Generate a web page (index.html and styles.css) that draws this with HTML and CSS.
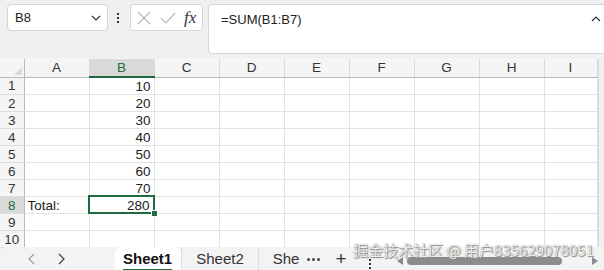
FILE: index.html
```html
<!DOCTYPE html>
<html lang="en">
<head>
    <meta charset="UTF-8">
    <title>Sheet</title>
    <link rel="stylesheet" href="styles.css">
</head>
<body>

    <div class="topbar">
        <div class="name-box">
            <span>B8</span>
            <svg class="chev" width="10" height="6" viewBox="0 0 10 6"><path d="M1 1l4 4 4-4" fill="none" stroke="#333" stroke-width="1.2"/></svg>
        </div>
        <div class="vdots"><i></i><i></i><i></i></div>
        <div class="fx-box">
            <svg width="14" height="14" viewBox="0 0 14 14"><path d="M1 1l12 12M13 1L1 13" stroke="#b8b8b8" stroke-width="1.2"/></svg>
            <svg width="16" height="12" viewBox="0 0 16 12"><path d="M1 6l5 5L15 1" fill="none" stroke="#b8b8b8" stroke-width="1.2"/></svg>
            <span class="fx">fx</span>
        </div>
        <div class="formula">
            <span>=SUM(B1:B7)</span>
            <svg class="caret" width="10" height="6" viewBox="0 0 10 6"><path d="M1 5l4-4 4 4" fill="none" stroke="#333" stroke-width="1.2"/></svg>
        </div>
    </div>

    <div class="sheet">
        <table class="grid">
            <colgroup>
                <col class="c-hd"><col class="c"><col class="c"><col class="c"><col class="c"><col class="c"><col class="c"><col class="c"><col class="c"><col class="c-last">
            </colgroup>
            <tr class="head">
                <th class="corner"></th><th>A</th><th class="sel-col">B</th><th>C</th><th>D</th><th>E</th><th>F</th><th>G</th><th>H</th><th>I</th>
            </tr>
            <tr><th>1</th><td></td><td class="num">10</td><td></td><td></td><td></td><td></td><td></td><td></td><td></td></tr>
            <tr><th>2</th><td></td><td class="num">20</td><td></td><td></td><td></td><td></td><td></td><td></td><td></td></tr>
            <tr><th>3</th><td></td><td class="num">30</td><td></td><td></td><td></td><td></td><td></td><td></td><td></td></tr>
            <tr><th>4</th><td></td><td class="num">40</td><td></td><td></td><td></td><td></td><td></td><td></td><td></td></tr>
            <tr><th>5</th><td></td><td class="num">50</td><td></td><td></td><td></td><td></td><td></td><td></td><td></td></tr>
            <tr><th>6</th><td></td><td class="num">60</td><td></td><td></td><td></td><td></td><td></td><td></td><td></td></tr>
            <tr><th>7</th><td></td><td class="num">70</td><td></td><td></td><td></td><td></td><td></td><td></td><td></td></tr>
            <tr><th class="sel-row">8</th><td>Total:</td><td class="num active">280</td><td></td><td></td><td></td><td></td><td></td><td></td><td></td></tr>
            <tr><th>9</th><td></td><td></td><td></td><td></td><td></td><td></td><td></td><td></td><td></td></tr>
            <tr><th>10</th><td></td><td></td><td></td><td></td><td></td><td></td><td></td><td></td><td></td></tr>
        </table>
        <div class="vscroll"></div>
    </div>

    <div class="tabbar">
        <div class="nav">
            <svg width="8" height="12" viewBox="0 0 8 12"><path d="M7 1L2 6l5 5" fill="none" stroke="#9a9a9a" stroke-width="1.2"/></svg>
            <svg width="8" height="12" viewBox="0 0 8 12"><path d="M1 1l5 5-5 5" fill="none" stroke="#444" stroke-width="1.2"/></svg>
        </div>
        <div class="tab active-tab"><span>Sheet1</span></div>
        <div class="tab">Sheet2</div>
        <div class="tab last-tab">She</div>
        <div class="more"><i></i><i></i><i></i></div>
        <div class="plus">+</div>
        <div class="vdots small"><i></i><i></i><i></i></div>
        <div class="hscroll">
            <span class="tri left"></span>
            <span class="thumb"></span>
            <span class="tri right"></span>
        </div>
        <div class="watermark">掘金技术社区 @ 用户835629078051</div>
    </div>

</body>
</html>
```

FILE: styles.css
```css
body {
    margin: 0;
    width: 604px;
    height: 270px;
    overflow: hidden;
    background-color: #f0f0f0;
    font-family: "Liberation Sans", Arial, sans-serif;
    color: #222;
}

.topbar {
    display: flex;
    align-items: flex-start;
    height: 58px;
    padding: 4px 0 0 7px;
    box-sizing: border-box;
}

.name-box {
    width: 101px;
    height: 27px;
    box-sizing: border-box;
    border: 1px solid #d6d6d6;
    border-radius: 4px;
    background-color: white;
    display: flex;
    align-items: center;
    justify-content: space-between;
    padding: 0 6px 0 7px;
    font-size: 13px;
}

.vdots {
    display: flex;
    flex-direction: column;
    gap: 2px;
    margin: 9px 11px 0 9px;
}

.vdots i {
    width: 2px;
    height: 2px;
    background-color: #333;
}

.fx-box {
    width: 73px;
    height: 27px;
    box-sizing: border-box;
    border: 1px solid #d6d6d6;
    border-radius: 4px;
    background-color: white;
    display: flex;
    align-items: center;
    gap: 9px;
    padding-left: 6px;
}

.fx {
    font-family: "Liberation Serif", serif;
    font-style: italic;
    font-size: 17px;
    color: #333;
    margin-left: -1px;
}

.formula {
    flex: 1;
    height: 50px;
    margin-left: 5px;
    box-sizing: border-box;
    border: 1px solid #d6d6d6;
    border-right: none;
    border-radius: 4px 0 0 4px;
    background-color: white;
    display: flex;
    align-items: flex-start;
    justify-content: space-between;
    padding: 7px 3px 0 12px;
    font-size: 13px;
}

.caret {
    margin-top: 4px;
}

.sheet {
    display: flex;
    height: 189px;
    border-top: 1px solid #f4f4f4;
    box-sizing: border-box;
}

.grid {
    border-collapse: collapse;
    table-layout: fixed;
    width: 597px;
    background-color: white;
    font-size: 13.5px;
}

.c-hd { width: 24px; }
.c { width: 65px; }
.c-last { width: 53px; }

.grid tr {
    height: 17px;
}

.grid td,
.grid th {
    border: 1px solid #e1e1e1;
    padding: 0 3px;
    height: 16px;
    line-height: 15px;
    white-space: nowrap;
    overflow: hidden;
}

.grid th {
    font-weight: normal;
    color: #333;
    background-color: #f5f5f5;
    border-color: #dcdcdc;
}

.grid tr th:first-child {
    text-align: center;
    padding: 0;
    border-left: none;
    border-right: 1px solid #b9b9b9;
}

.head th {
    height: 17px;
    border-top: none;
    border-bottom: 1px solid #b9b9b9;
}

.corner {
    position: relative;
}

.corner::after {
    content: "";
    position: absolute;
    right: 2px;
    bottom: 2px;
    border-left: 8px solid transparent;
    border-bottom: 8px solid #dadada;
}

.head .sel-col {
    background-color: #d9d9d9;
    color: #1e6b41;
    border-bottom: 2px solid #1e6b41;
}

.grid .sel-row {
    background-color: #d9d9d9;
    color: #1e6b41;
    border-right: 2px solid #1e6b41;
}

.num {
    text-align: right;
}

.grid td.active {
    position: relative;
    overflow: visible;
    padding-right: 4px;
}

.active::after {
    content: "";
    position: absolute;
    left: -2px;
    top: -2px;
    right: -1px;
    bottom: -1px;
    border: 2px solid #1e6b41;
}

.active::before {
    content: "";
    position: absolute;
    right: -4px;
    bottom: -4px;
    width: 5px;
    height: 5px;
    background-color: #1e6b41;
    border: 1px solid white;
    z-index: 1;
}

.vscroll {
    flex: 1;
    background-color: #f0f0f0;
    border-left: 1px solid #dcdcdc;
}

.tabbar {
    position: relative;
    display: flex;
    align-items: center;
    height: 23px;
    background-color: #f3f3f3;
    border-radius: 6px 0 0 0;
}

.nav {
    display: flex;
    gap: 23px;
    width: 115px;
    padding-left: 27px;
    box-sizing: border-box;
}

.tab {
    height: 23px;
    line-height: 24px;
    font-size: 15px;
    color: #333;
    padding: 0 14px;
    border-left: 1px solid #dcdcdc;
}

.active-tab {
    background-color: white;
    border-left: none;
    border-radius: 6px 6px 0 0;
    padding: 0 9px 0 8px;
    font-weight: bold;
    color: #111;
}

.active-tab span {
    display: inline-block;
    line-height: 21px;
    border-bottom: 2px solid #1e6b41;
}

.last-tab {
    padding-right: 8px;
}

.more {
    display: flex;
    gap: 2px;
    margin: 1px 15px 0 0;
}

.more i {
    width: 3px;
    height: 3px;
    border-radius: 50%;
    background-color: #444;
}

.plus {
    font-size: 19px;
    font-weight: 300;
    color: #333;
    margin-right: 22px;
}

.vdots.small {
    margin: 10px 26px 0 0;
}

.hscroll {
    display: flex;
    align-items: center;
    gap: 4px;
    flex: 1;
    margin-top: 4px;
}

.tri {
    width: 0;
    height: 0;
    border-top: 4px solid transparent;
    border-bottom: 4px solid transparent;
}

.tri.left {
    border-right: 6px solid #8a8a8a;
}

.tri.right {
    border-left: 6px solid #8a8a8a;
    margin-left: 26px;
}

.thumb {
    width: 155px;
    height: 8px;
    border-radius: 4px;
    background-color: #8c8c8c;
}

.watermark {
    position: absolute;
    right: 10px;
    top: -8px;
    font-family: "Noto Sans CJK SC", "Liberation Sans", sans-serif;
    font-size: 15px;
    color: rgba(255, 255, 255, 0.85);
    text-shadow: 0 0 1px #777, 1px 1px 1px #888;
    white-space: nowrap;
}
```
